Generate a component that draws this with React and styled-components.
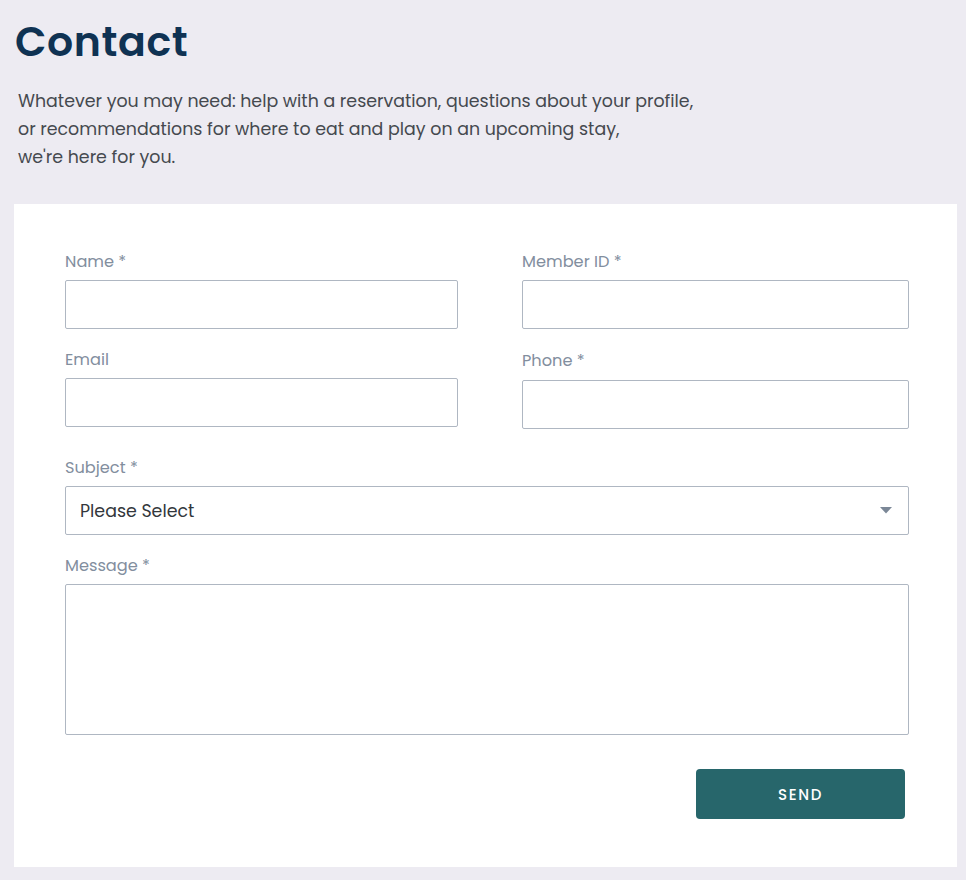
import React from "react";
import styled, { createGlobalStyle } from "styled-components";

const GlobalStyle = createGlobalStyle`
  html, body {
    margin: 0;
    padding: 0;
    background: #edebf2;
  }
  body {
    font-family: "Poppins", "Open Sans", "Noto Sans", sans-serif;
  }
  * {
    box-sizing: border-box;
  }
`;

const ContactPage = () => {
  return (
    <Page>
      <GlobalStyle />
      <Header>
        <Title>Contact</Title>
        <Intro>
          Whatever you may need: help with a reservation, questions about your profile,
          <br />
          or recommendations for where to eat and play on an upcoming stay,
          <br />
          we're here for you.
        </Intro>
      </Header>
      <Card>
        <Grid>
          <Field>
            <Label>Name *</Label>
            <Input type="text" />
          </Field>
          <Field>
            <Label>Member ID *</Label>
            <Input type="text" />
          </Field>
          <Field $top={21}>
            <Label>Email</Label>
            <Input type="email" />
          </Field>
          <Field $top={22}>
            <Label>Phone *</Label>
            <Input type="tel" $shift={1} />
          </Field>
          <Field $top={29} $wide>
            <Label>Subject *</Label>
            <SelectBox>
              <span>Please Select</span>
              <svg width="12" height="7" viewBox="0 0 12 7">
                <path d="M0 0h12L6 6.5z" fill="#7b8797" />
              </svg>
            </SelectBox>
          </Field>
          <Field $top={21} $wide>
            <Label>Message *</Label>
            <TextArea />
          </Field>
        </Grid>
        <Actions>
          <SendButton type="button">SEND</SendButton>
        </Actions>
      </Card>
    </Page>
  );
};

const Page = styled.div`
  padding: 14px 9px 13px 14px;
`;

const Header = styled.header`
  padding: 0 0 33px 1px;
`;

const Title = styled.h1`
  margin: 0;
  font-size: 41px;
  line-height: 56px;
  font-weight: 600;
  color: #0f3253;
  letter-spacing: 0.6px;
`;

const Intro = styled.p`
  margin: 17px 0 0 3px;
  font-size: 17.4px;
  line-height: 28px;
  color: #45494f;
`;

const Card = styled.section`
  background: #ffffff;
  padding: 48px 49px 48px 51px;
`;

const Grid = styled.div`
  display: grid;
  grid-template-columns: 393px 387px;
  column-gap: 64px;
`;

const Field = styled.div`
  display: flex;
  flex-direction: column;
  margin-top: ${(p) => p.$top || 0}px;
  grid-column: ${(p) => (p.$wide ? "1 / -1" : "auto")};
`;

const Label = styled.label`
  font-size: 16.2px;
  line-height: 20px;
  color: #828e9e;
  margin-bottom: 8px;
`;

const Input = styled.input`
  height: 49px;
  width: 100%;
  margin-top: ${(p) => p.$shift || 0}px;
  border: 1.5px solid #afb7c2;
  border-radius: 2px;
  background: #fff;
  outline: none;
`;

const SelectBox = styled.div`
  height: 49px;
  display: flex;
  align-items: center;
  justify-content: space-between;
  padding: 0 16px 0 14px;
  border: 1.5px solid #afb7c2;
  border-radius: 2px;
  font-size: 17.4px;
  color: #33373c;
`;

const TextArea = styled.textarea`
  height: 151px;
  width: 100%;
  border: 1.5px solid #afb7c2;
  border-radius: 2px;
  resize: none;
  outline: none;
`;

const Actions = styled.div`
  display: flex;
  justify-content: flex-end;
  padding: 34px 3px 0 0;
`;

const SendButton = styled.button`
  width: 209px;
  height: 50px;
  border: none;
  border-radius: 4px;
  background: #27666b;
  color: #ffffff;
  font-family: inherit;
  font-size: 15px;
  font-weight: 500;
  letter-spacing: 1.6px;
  cursor: pointer;
`;

export default ContactPage;
